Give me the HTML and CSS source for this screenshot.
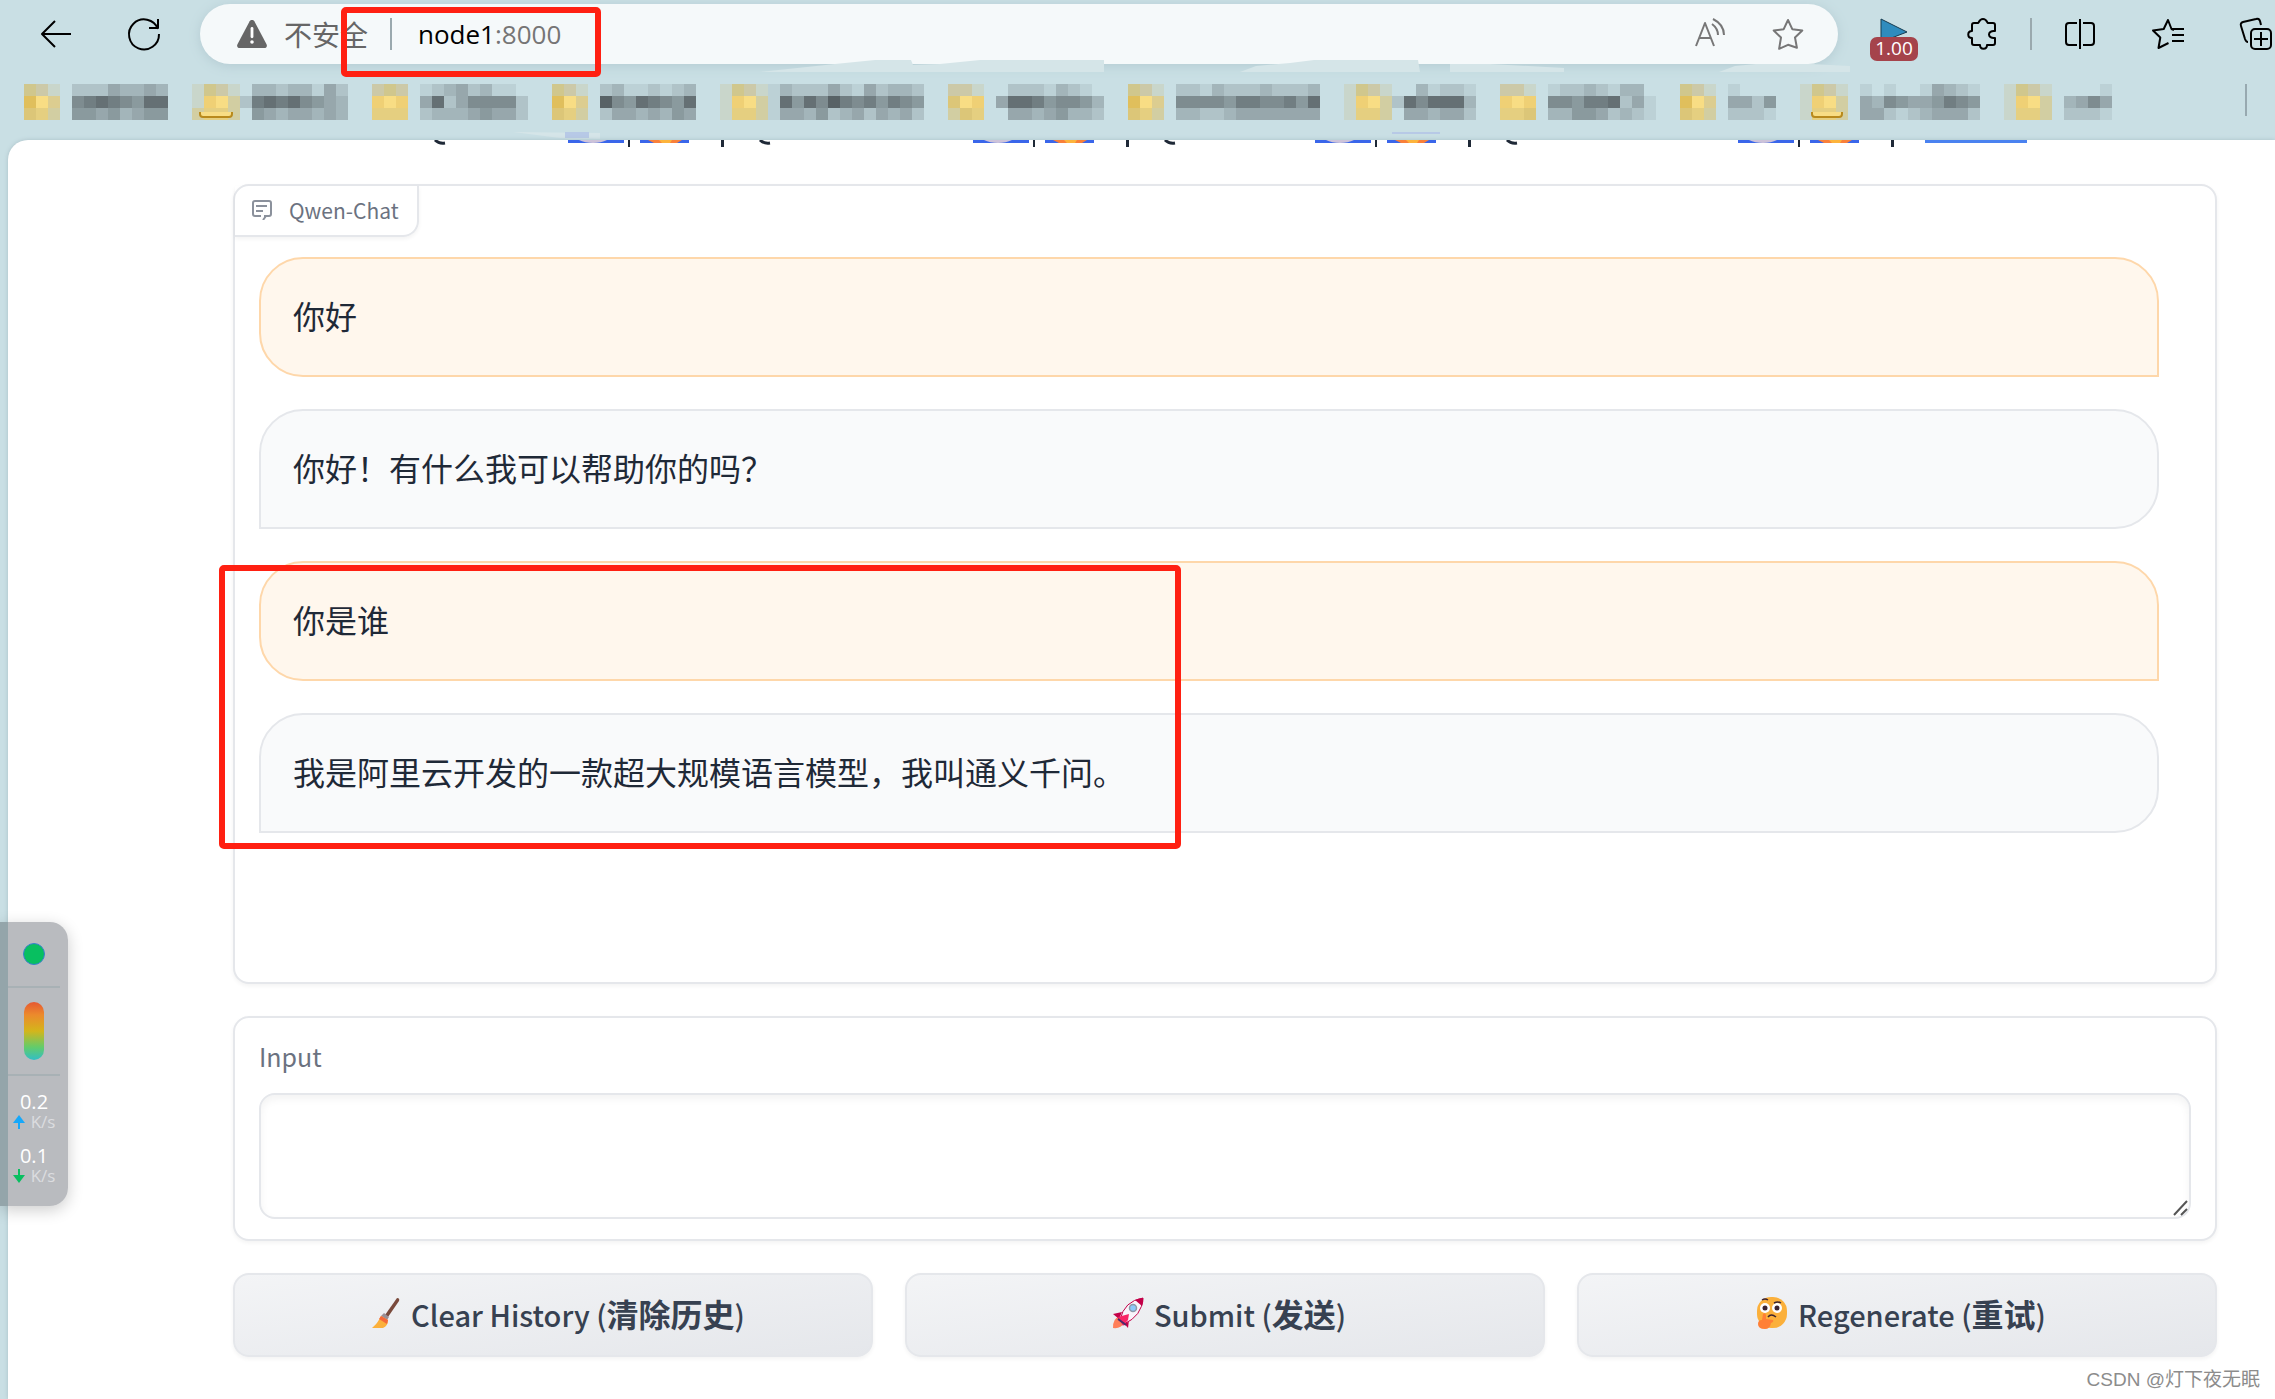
FILE: index.html
```html
<!DOCTYPE html>
<html lang="zh-CN">
<head>
<meta charset="utf-8">
<title>Qwen-Chat</title>
<link rel="stylesheet" href="styles.css">
</head>
<body>
<header class="chrome">
  <div class="toolbar">
    <button class="tool back" aria-label="Back"><svg viewBox="0 0 32 32"><path d="M15 3 2 16l13 13M2 16h29"/></svg></button>
    <button class="tool reload" aria-label="Reload"><svg viewBox="0 0 32 32"><path d="M30 11A15 15 0 1 0 31 16M30 1v9h-9"/></svg></button>
    <div class="address">
      <svg class="warn" viewBox="0 0 32 32"><path d="M16 1c1 0 2 .5 2.500 1.400L31.500 27c1 2-.2 4-2.500 4H3c-2.300 0-3.500-2-2.500-4L13.500 2.400C14 1.500 15 1 16 1z" fill="#666"/><path d="M16 10v9" stroke="#fff" stroke-width="3" stroke-linecap="round"/><circle cx="16" cy="24.500" r="1.900" fill="#fff"/></svg>
      <span class="insecure">不安全</span>
      <span class="rule"></span>
      <span class="url">node1<span class="port">:8000</span></span>
      <button class="tool soft read" aria-label="Read aloud"><svg viewBox="0 0 32 32"><path d="M2 28 11 5l9 23M5 20h12M18 6c4 3 6 6 6 11M19 1c6 3 11 8 11 16"/></svg></button>
      <button class="tool soft" aria-label="Favorite"><svg viewBox="0 0 32 32"><path d="M16 2l4.300 9.200 10 1.300-7.300 7 1.900 10.300L16 26.800 7.100 30.800 9 19.500l-7.300-7 10-1.300z"/></svg></button>
    </div>
    <button class="ext" aria-label="Speed"><svg viewBox="0 0 28 24"><path d="M1 1 27 14 1 24z" fill="#2f8cbe" stroke="#173c50"/></svg><span class="badge">1.00</span></button>
    <button class="tool" aria-label="Extensions"><svg viewBox="0 0 32 32"><path d="M8 5h4c1 0 1-4 5-4s4 4 5 4h5q2 0 2 2v6c-8-1-8 8 0 7v5q0 2-2 2h-6c0 5-7 5-7 0H8q-2 0-2-2v-5c-5 0-5-7 0-7V7q0-2 2-2z"/></svg></button>
    <span class="rule"></span>
    <button class="tool split" aria-label="Split screen"><svg viewBox="0 0 32 32"><path d="M13 5H5Q2 5 2 8v16q0 3 3 3h8M19 5h8q3 0 3 3v16q0 3-3 3h-8M16 1v30"/></svg></button>
    <button class="tool wide" aria-label="Favorites"><svg viewBox="0 0 32 32"><path d="M22 12l-2.500-1L16 2l-4.300 9L1 12.500l7.300 7L6.500 30l10-5M20 11h12M20 17h12M20 23h12"/></svg></button>
    <button class="tool wide" aria-label="Collections"><svg viewBox="0 0 32 32"><path d="M8 24q-2 0-3-3L1 8q-1-3 2-4l13-3q3-1 4 2l1 4"/><rect x="11" y="11" width="20" height="20" rx="4"/><path d="M21 14v14M14 21h14"/></svg></button>
  </div>
  <nav class="bookmarks" id="bookmarks"></nav>
  <svg class="streaks" width="2275" height="140" viewBox="0 0 2275 140">
    <path d="M760 72 835 64 875 60h36l2 5 27-1 40-4h124v12zM1240 72l16-6 34-3 24-3h104l2 12zM1450 64h40l74 4v4h-114zM1719 72l16-6 21-2h54l40 2v6zM513 132l87 1v6l-40-1z"/>
    <path d="M565 132h24v6h-24zM1392 132h48v2h-48z" fill="#b7c9e6"/>
  </svg>
</header>
<main class="page">
  <svg class="cut" width="2040" height="8" viewBox="0 0 2040 8">
    <defs>
      <g id="pair"><path d="M0 0h56v3H0zM72 0h49v3H72z" fill="#3a66ea"/><path d="M11 0h28q-6 3-14 3t-14-3z" fill="#cdc3da"/><path d="M80 0h34l-5 3H86z" fill="#f9803a"/><path d="M91 0h13l-2 3h-8z" fill="#fdb43c"/><path d="M60 0h2v7h-2zM153 0h3v7h-3z" fill="#1f2937"/></g>
      <path id="tail" d="M0 0q4 4 10 3" fill="none" stroke="#1f2937" stroke-width="3"/>
    </defs>
    <use href="#pair" x="568"/><use href="#pair" x="973"/><use href="#pair" x="1315"/><use href="#pair" x="1738"/>
    <use href="#tail" x="435"/><use href="#tail" x="760"/><use href="#tail" x="1165"/><use href="#tail" x="1507"/>
    <path d="M1925 0h102v3h-102z" fill="#4a82f0"/>
  </svg>
  <section class="panel chat">
    <div class="tab"><svg viewBox="0 0 20 20"><path d="M12 16h5q2 0 2-2V3q0-2-2-2H3Q1 1 1 3v11q0 2 2 2h6M4 6h11M4 11h7M14 16l-3 4"/></svg><span>Qwen-Chat</span></div>
    <div class="log">
      <p class="msg user">你好</p>
      <p class="msg bot">你好！有什么我可以帮助你的吗？</p>
      <p class="msg user">你是谁</p>
      <p class="msg bot">我是阿里云开发的一款超大规模语言模型，我叫通义千问。</p>
    </div>
  </section>
  <section class="panel entry">
    <label for="query">Input</label>
    <div class="field">
      <textarea id="query"></textarea>
      <svg class="grip" viewBox="0 0 16 16"><path d="M2 15 15 1M9 15l6-6"/></svg>
    </div>
  </section>
  <div class="actions">
    <button class="action"><svg viewBox="0 0 32 32"><path d="M28 1q3 0 2 3L19 20l-3-2z" fill="#7a4a3c"/><path d="M15 16l5 4-2 3-6-4z" fill="#9b8f96"/><path d="M12 19l7 4q0 6-5 8H3q6-5 9-12z" fill="#fbb03b"/><path d="M12 19l7 4-1 4-8-5z" fill="#f4683a"/></svg><span>Clear History (<b>清除历史</b>)</span></button>
    <button class="action"><svg viewBox="0 0 32 32"><path d="M7 20q-6 1-6 11 8 1 11-5z" fill="#ff7f5a"/><path d="M10 15 1 17l6 5zM17 23l-1 8-6-7z" fill="#c30048"/><path d="M8 23Q12 4 31 1q-1 18-19 26z" fill="#f8f4fa" stroke="#c30048"/><path d="M23 3q4-2 8-2 1 3-1 8z" fill="#c30048"/><path d="M6 20l11-3-1 6-5 6z" fill="#f72565"/><path d="M6 22l8 6" stroke="#4a2a6a" stroke-width="2"/><circle cx="21" cy="11" r="3.500" fill="#8cc9fb" stroke="#8e9aa8" stroke-width="1.500"/></svg><span>Submit (<b>发送</b>)</span></button>
    <button class="action"><svg viewBox="0 0 32 32"><rect x="1" y="0" width="30" height="31" rx="14" fill="#fbb03b"/><g fill="#fff"><circle cx="9" cy="11" r="5"/><circle cx="21" cy="11" r="5"/></g><g fill="#3c2430"><circle cx="9" cy="11" r="2.500"/><circle cx="21" cy="11" r="2.500"/></g><path d="M6 3q3-2 6 0M18 6q4-2 7 0M12 20q3-4 8 0" fill="none" stroke="#3c2430" stroke-width="1.500"/><path d="M7 17q2-2 3 1v4l7 1q1 2-2 3-1 6-6 6-7 0-7-5 0-4 4-4z" fill="#ff7f36"/></svg><span>Regenerate (<b>重试</b>)</span></button>
  </div>
</main>
<aside class="monitor">
  <span class="dot"></span>
  <span class="gauge"></span>
  <div class="rates">
    <div class="rate">0.2<small><svg viewBox="0 0 12 14"><path d="M6 0l6 8H7v6H5V8H0z" fill="#16a8fa"/></svg>K/s</small></div>
    <div class="rate">0.1<small><svg viewBox="0 0 12 14"><path d="M6 14l6-8H7V0H5v6H0z" fill="#08bf60"/></svg>K/s</small></div>
  </div>
</aside>
<div class="mark mark-url"></div>
<div class="mark mark-reply"></div>
<div class="credit">CSDN @灯下夜无眠</div>
<script src="bookmarks.js"></script>
</body>
</html>
```
FILE: styles.css
```css
* { box-sizing: border-box; }
body {
  margin: 0;
  min-height: 100vh;
  position: relative;
  display: flex;
  flex-direction: column;
  overflow: hidden;
  background: #c9dfe4;
  font-family: "Noto Sans CJK SC", sans-serif;
  color: #1f2937;
}
button { border: 0; padding: 0; margin: 0; background: none; font: inherit; color: inherit; }
svg { display: block; flex: none; }

.chrome { position: relative; height: 140px; flex: none; padding-top: 4px; }
.toolbar { display: flex; align-items: center; height: 60px; padding: 0 3px 0 40px; }
.tool { width: 32px; height: 32px; flex: none; }
.tool svg { width: 32px; height: 32px; fill: none; stroke: #000; stroke-width: 2; stroke-linejoin: round; overflow: visible; }
.tool.soft svg { stroke: #777; }
.reload { margin-left: 56px; }
.address {
  flex: 1;
  height: 60px;
  margin: 0 32px 0 40px;
  padding: 0 34px 0 36px;
  display: flex;
  align-items: center;
  border-radius: 30px;
  background: #f5f9fa;
  box-shadow: 0 2px 12px #b4cbd2;
}
.warn { width: 32px; height: 30px; }
.insecure { margin-left: 16px; font-size: 28px; line-height: 32px; color: #666; }
.rule { width: 2px; height: 32px; background: #9aa9ae; flex: none; }
.address .rule { margin: 0 26px 0 22px; }
.url { font-family: "Open Sans", sans-serif; font-size: 26px; line-height: 32px; color: #000; }
.port { color: #757575; }
.read { margin: 0 46px 0 auto; }
.ext { width: 48px; height: 44px; margin-right: 48px; position: relative; flex: none; }
.ext svg { width: 28px; height: 24px; margin: 0 0 0 10px; position: absolute; top: 6px; }
.badge {
  position: absolute;
  left: 0;
  right: 0;
  top: 25px;
  height: 24px;
  border-radius: 7px;
  background: #a5434b;
  color: #fff;
  font: 19px/22px "Open Sans", sans-serif;
}
.toolbar > .rule { margin: 0 32px; }
.wide { margin-left: 56px; }
.bookmarks { display: flex; gap: 24px; margin-top: 20px; padding: 0 28px 0 24px; height: 36px; }
.bookmarks a { display: block; flex: none; }
.bookmarks .rule { margin-left: auto; background: #97a9b0; }
.streaks { position: absolute; left: 0; top: 0; fill: #d5e5e8; pointer-events: none; }

.page {
  flex: 1;
  position: relative;
  margin-left: 8px;
  padding: 44px 58px 42px 225px;
  display: flex;
  flex-direction: column;
  gap: 32px;
  background: #fff;
  border-top-left-radius: 20px;
  box-shadow: 0 0 4px #a9bfc6;
}
.cut { position: absolute; left: -8px; top: 0; }
.panel { border: 2px solid #e5e7eb; border-radius: 16px; background: #fff; box-shadow: 0 2px 4px #0000000d; }
.chat { min-height: 800px; }
.tab {
  display: flex;
  align-items: center;
  gap: 17px;
  width: max-content;
  height: 51px;
  padding: 0 18px 2px 17px;
  border: solid #e5e7eb;
  border-width: 0 2px 2px 0;
  border-bottom-right-radius: 16px;
  box-shadow: 0 2px 4px #0000000d;
  font-size: 21px;
  color: #6b7280;
}
.tab svg { width: 20px; height: 20px; fill: none; stroke: #8b919c; stroke-width: 2; }
.log { display: flex; flex-direction: column; gap: 32px; padding: 20px 56px 0 24px; }
.msg { margin: 0; padding: 30px 32px 34px; border: 2px solid; border-radius: 44px; font-size: 32px; line-height: 52px; }
.user { background: #fff7ed; border-color: #fed7aa; border-bottom-right-radius: 0; }
.bot { background: #f9fafb; border-color: #e5e7eb; border-bottom-left-radius: 0; }
.entry { padding: 18px 24px 20px; }
.entry label { display: block; font-size: 25px; line-height: 40px; margin-bottom: 17px; color: #6b7280; }
.field { position: relative; }
textarea {
  display: block;
  width: 100%;
  height: 126px;
  padding: 20px;
  border: 2px solid #e5e7eb;
  border-radius: 16px;
  background: #fff;
  box-shadow: inset 0 4px 8px #0000000d;
  font: 28px/40px "Noto Sans CJK SC", sans-serif;
  outline: 0;
  resize: none;
}
.grip { position: absolute; right: 3px; bottom: 3px; width: 16px; height: 16px; fill: none; stroke: #555; stroke-width: 2; }
.actions { display: grid; grid-template-columns: repeat(3, 1fr); gap: 32px; }
.action {
  display: flex;
  align-items: center;
  justify-content: center;
  gap: 10px;
  height: 84px;
  padding: 0 0 4px 8px;
  border: 2px solid #e5e7eb;
  border-radius: 16px;
  background: linear-gradient(to bottom right, #f3f4f6, #e5e7eb);
  box-shadow: 0 2px 4px #0000000d;
  font-size: 29px;
  font-weight: 500;
  line-height: 48px;
  color: #374151;
}
.action b { font-size: 32px; font-weight: 700; }
.action svg { width: 32px; height: 32px; }

.monitor {
  position: absolute;
  left: 0;
  top: 922px;
  width: 68px;
  height: 284px;
  display: flex;
  flex-direction: column;
  align-items: center;
  border-radius: 0 18px 18px 0;
  background: linear-gradient(to right, #94a5aa 8px, #b9bbbf 8px);
  box-shadow: 0 4px 16px #0003;
  color: #fff;
}
.dot { width: 22px; height: 22px; margin-top: 21px; border-radius: 50%; background: #08bf60; border: 1px solid #3b7fd0; }
.gauge {
  display: flex;
  justify-content: center;
  align-items: center;
  width: 52px;
  height: 90px;
  margin-top: 21px;
  border: solid #a8b1b5;
  border-width: 2px 0;
}
.gauge::before {
  content: "";
  width: 20px;
  height: 58px;
  border-radius: 10px;
  background: linear-gradient(#e65832, #ec8a2c 22%, #d4b51b 50%, #62cc6b 78%, #32bec6);
}
.rates { display: flex; flex-direction: column; gap: 14px; padding-top: 14px; }
.rate { font: 20px/24px "Open Sans", sans-serif; text-align: center; }
.rate small { display: flex; align-items: center; gap: 6px; font-size: 17px; line-height: 16px; color: #dcdde0; }
.rate svg { width: 12px; height: 14px; }
.mark { position: absolute; border: 6px solid #ff2012; border-radius: 5px; pointer-events: none; }
.mark-url { left: 341px; top: 7px; width: 260px; height: 70px; }
.mark-reply { left: 219px; top: 565px; width: 962px; height: 284px; }
.credit { position: absolute; right: 15px; bottom: 5px; font: 19px/28px "Liberation Sans", "Noto Sans CJK SC", sans-serif; color: #8c8c8c; }
```
FILE: bookmarks.js
```js
// Each bookmark is three rows of 12px tiles: letters are folder tints, digits are label tones.
const folder = {
  a: '#d0c78d', b: '#ccc9a8', c: '#c9d6cb', d: '#e0bf5c', e: '#f8dd84',
  f: '#dccd90', g: '#dcc678', h: '#e5cf80', i: '#d2cea2', j: '#efd075'
};
const items = [
  ['abc 22243343', 'def 67876588', 'ghi 55453455'],
  ['cabc033233142', 'cjei278786543', 'ihhi054344343'],
  ['bab 123423110', 'jej 482466662', 'hhh 233345442'],
  ['abc 23112123', 'def 96587658', 'ghi 24434354'],
  ['cabc1322242142332', 'cjei1858697675765', 'chhi1443523424342'],
  ['bbc 022213210', 'gej 488756653', 'igh 044345332'],
  ['abc 221322232223', 'def 666657766758', 'ghi 332234444444'],
  ['cabc0031221', 'cjei2868883', 'chhi0443442'],
  ['bbc 122321330', 'jej 665778241', 'hhg 335542321'],
  ['abc 1000', 'def 4425', 'ghi 2221'],
  ['cabc 1010014321', 'cjei 4365445765', 'chhi 4421234442'],
  ['cabc 0001', 'cjei 3464', 'chhi 2221']
];
function tone(n) {
  const k = n / 9;
  const mix = (a, b) => Math.round(a + (b - a) * k);
  return `rgb(${mix(201, 88)},${mix(223, 98)},${mix(228, 102)})`;
}
const nav = document.getElementById('bookmarks');
for (const rows of items) {
  let tiles = '';
  rows.forEach((row, y) => [...row].forEach((ch, x) => {
    if (ch === ' ') return;
    tiles += `<rect x="${x * 12}" y="${y * 12}" width="12" height="12" fill="${folder[ch] || tone(+ch)}"/>`;
  }));
  const w = rows[0].length * 12;
  const link = document.createElement('a');
  link.href = '#';
  link.setAttribute('aria-label', 'Bookmark folder');
  link.innerHTML = `<svg width="${w}" height="36" shape-rendering="crispEdges">${tiles}</svg>`;
  nav.append(link);
}
// Folder outline that shows through below some of the tiles.
[[1, 8, 32], [10, 12, 30]].forEach(([index, x, w]) => {
  const svg = nav.children[index].firstChild;
  svg.innerHTML += `<path d="M${x} 28v2q0 3 3 3h${w - 6}q3 0 3-3v-2" fill="#f8dd84" stroke="#b98a1c" stroke-width="2" shape-rendering="auto"/>`;
});
const rule = document.createElement('span');
rule.className = 'rule';
nav.append(rule);
```
